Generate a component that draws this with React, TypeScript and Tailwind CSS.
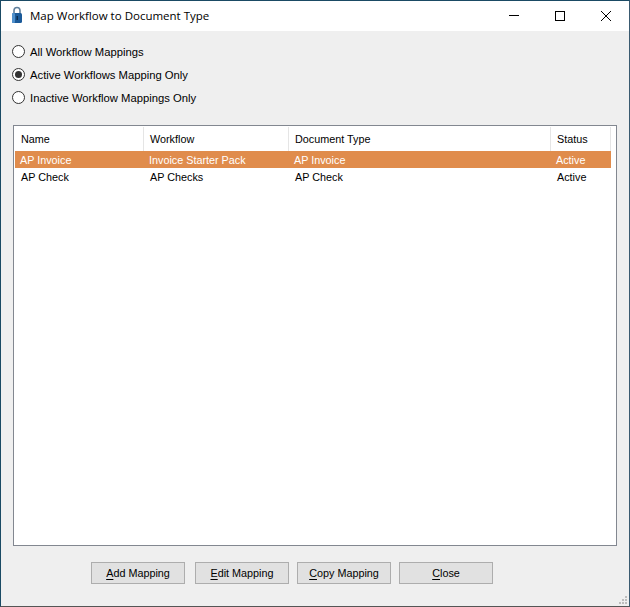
const SANS = "font-['Liberation_Sans',Arial,sans-serif]";

function Radio({ label, checked }: { label: string; checked?: boolean }) {
  return (
    <div className="flex h-[23px] items-center gap-[5px]">
      <span className="flex h-[13px] w-[13px] items-center justify-center rounded-full border border-[#333333] bg-white">
        {checked && <span className="h-[7px] w-[7px] rounded-full bg-[#333333]" />}
      </span>
      <span className="pt-[2px] text-[11.25px] text-black">{label}</span>
    </div>
  );
}

const columns = [
  { name: "Name", width: "w-[129px]" },
  { name: "Workflow", width: "w-[145px]" },
  { name: "Document Type", width: "w-[262px]" },
  { name: "Status", width: "w-[60px]" },
];

const rows = [
  { cells: ["AP Invoice", "Invoice Starter Pack", "AP Invoice", "Active"], selected: true },
  { cells: ["AP Check", "AP Checks", "AP Check", "Active"], selected: false },
];

function Btn({ first, rest }: { first: string; rest: string }) {
  return (
    <button className="flex h-[22px] w-[94px] items-center justify-center border border-[#adadad] bg-[#e1e1e1] text-[10.8px] text-black">
      <span className="underline underline-offset-2">{first}</span>
      <span>{rest}</span>
    </button>
  );
}

export default function App() {
  return (
    <div className={`${SANS} relative flex h-[607px] w-[630px] flex-col overflow-hidden border border-t-[#1a4a64] border-l-[#1a4a64] border-r-[#3a5a70] border-b-[#555555] bg-[#efefef]`}>
      <div className="flex h-[30px] shrink-0 items-center bg-white">
        <svg width="12" height="18" viewBox="0 0 12 18" className="ml-[10px] -mt-[2px]">
          <path d="M3 8V4.5a3 3 0 0 1 6 0V8" fill="none" stroke="#5f7f9c" strokeWidth="1.6" />
          <rect x="1" y="7" width="10" height="10" rx="1.5" fill="#1b5a99" />
          <rect x="1" y="7" width="3" height="10" rx="1" fill="#4f90cc" />
          <rect x="5.5" y="10" width="1.5" height="4" fill="#0b2c4e" />
        </svg>
        <span className="ml-[7px] font-['Open_Sans',sans-serif] text-[11.5px] text-black">Map Workflow to Document Type</span>
        <div className="ml-auto flex h-full items-center">
          <svg width="46" height="30" viewBox="0 0 46 30">
            <path d="M18 14.5H28" stroke="#000" strokeWidth="1" />
          </svg>
          <svg width="46" height="30" viewBox="0 0 46 30">
            <rect x="18.5" y="10.5" width="9" height="9" fill="none" stroke="#000" />
          </svg>
          <svg width="46" height="30" viewBox="0 0 46 30">
            <path d="M18 10L28 20M28 10L18 20" stroke="#000" strokeWidth="1" />
          </svg>
        </div>
      </div>
      <div className="flex shrink-0 flex-col pl-[11px] pt-[9px]">
        <Radio label="All Workflow Mappings" />
        <Radio label="Active Workflows Mapping Only" checked />
        <Radio label="Inactive Workflow Mappings Only" />
      </div>
      <div className="mx-[12px] mt-[16px] flex h-[421px] flex-col border border-[#828790] bg-white p-px">
        <div className="flex h-[24px] shrink-0">
          {columns.map((c) => (
            <div key={c.name} className={`flex ${c.width} items-center border-r border-[#e5e5e5] pl-[6px] text-[10.8px] text-black`}>
              {c.name}
            </div>
          ))}
        </div>
        {rows.map((r) => (
          <div key={r.cells[0]} className={`flex h-[17px] w-[596px] items-center pt-[2px] text-[10.8px] ${r.selected ? "bg-[#e08c4c] text-white" : "text-black"}`}>
            {r.cells.map((cell, i) => (
              <div key={i} className={`${columns[i].width} ${r.selected ? "pl-[5px]" : "pl-[6px]"}`}>
                {cell}
              </div>
            ))}
          </div>
        ))}
      </div>
      <div className="mt-[16px] flex gap-[10px] pl-[90px]">
        <Btn first="A" rest="dd Mapping" />
        <Btn first="E" rest="dit Mapping" />
        <div className="-ml-[2px]"><Btn first="C" rest="opy Mapping" /></div>
        <div className="-ml-[2px]"><Btn first="C" rest="lose" /></div>
      </div>
      <svg width="8" height="8" viewBox="0 0 8 8" className="absolute bottom-[2px] right-[2px]">
        <g fill="#bdbdbd">
          <rect x="6" y="0" width="2" height="2" />
          <rect x="3" y="3" width="2" height="2" />
          <rect x="6" y="3" width="2" height="2" />
          <rect x="0" y="6" width="2" height="2" />
          <rect x="3" y="6" width="2" height="2" />
          <rect x="6" y="6" width="2" height="2" />
        </g>
      </svg>
    </div>
  );
}
